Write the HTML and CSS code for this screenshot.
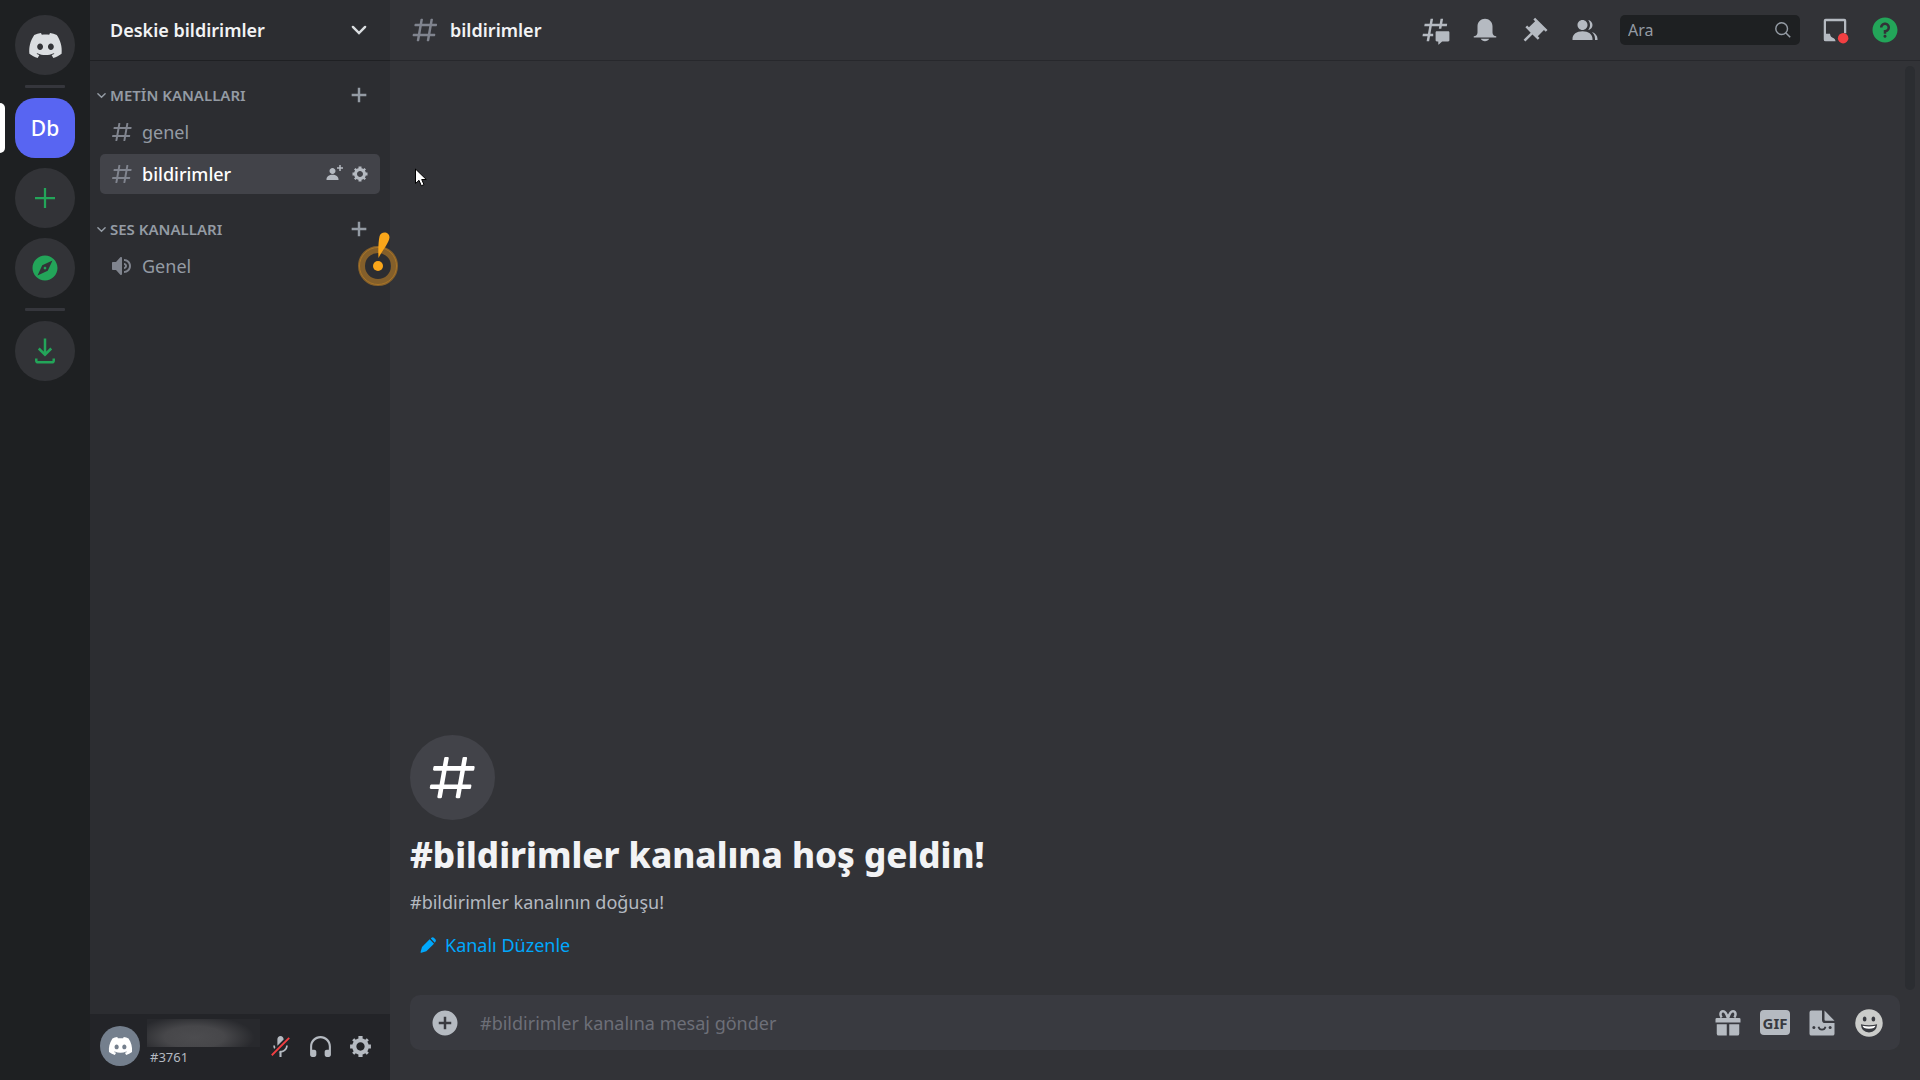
FILE: index.html
```html
<!DOCTYPE html>
<html lang="tr">

<head>
  <meta charset="UTF-8">
  <meta name="viewport" content="width=device-width, initial-scale=1.0">
  <title>#bildirimler | Deskie bildirimler</title>
  <link rel="stylesheet" href="styles.css">
</head>

<body>
  <!-- shared icons -->
  <svg class="sprite" aria-hidden="true">
    <symbol id="icon-hash" viewBox="0 0 24 24">
      <path d="M5.88657 21C5.57547 21 5.3399 20.7189 5.39427 20.4126L6.00001 17H2.59511C2.28449 17 2.04905 16.7198 2.10259 16.4138L2.27759 15.4138C2.31946 15.1746 2.52722 15 2.77011 15H6.35001L7.41001 9H4.00511C3.69449 9 3.45905 8.71977 3.51259 8.41381L3.68759 7.41381C3.72946 7.17456 3.93722 7 4.18011 7H7.76001L8.39677 3.41262C8.43914 3.17391 8.64664 3 8.88907 3H9.87344C10.1845 3 10.4201 3.28107 10.3657 3.58738L9.76001 7H15.76L16.3968 3.41262C16.4391 3.17391 16.6466 3 16.8891 3H17.8734C18.1845 3 18.4201 3.28107 18.3657 3.58738L17.76 7H21.1649C21.4755 7 21.711 7.28023 21.6574 7.58619L21.4824 8.58619C21.4406 8.82544 21.2328 9 20.9899 9H17.41L16.35 15H19.7549C20.0655 15 20.301 15.2802 20.2474 15.5862L20.0724 16.5862C20.0306 16.8254 19.8228 17 19.5799 17H16L15.3632 20.5874C15.3209 20.8261 15.1134 21 14.8709 21H13.8866C13.5755 21 13.3399 20.7189 13.3943 20.4126L14 17H8.00001L7.36325 20.5874C7.32088 20.8261 7.11337 21 6.87094 21H5.88657ZM9.41045 9L8.35045 15H14.3504L15.4104 9H9.41045Z"/>
    </symbol>
    <symbol id="icon-discord" viewBox="0 0 28 20">
      <path d="M23.0212 1.67671C21.3107 0.879656 19.5079 0.318797 17.6584 0C17.4062 0.461742 17.1749 0.934541 16.9708 1.4184C15.003 1.12145 12.9974 1.12145 11.0283 1.4184C10.819 0.934541 10.589 0.461744 10.3368 0.00546311C8.48074 0.324393 6.67795 0.885118 4.96746 1.68231C1.56727 6.77853 0.649666 11.7538 1.11108 16.652C3.10102 18.1418 5.3262 19.2743 7.69177 20C8.22338 19.2743 8.69519 18.4993 9.09812 17.691C8.32996 17.3997 7.58522 17.0424 6.87684 16.6135C7.06531 16.4762 7.24726 16.3387 7.42403 16.1847C11.5911 18.1749 16.408 18.1749 20.5763 16.1847C20.7531 16.3332 20.9351 16.4762 21.1171 16.6135C20.41 17.0369 19.6639 17.3997 18.897 17.691C19.3052 18.4993 19.7718 19.2689 20.3021 19.9945C22.6677 19.2689 24.8929 18.1364 26.8828 16.6466H26.8893C27.43 10.9731 25.9665 6.04728 23.0212 1.67671ZM9.68041 13.6383C8.39754 13.6383 7.34085 12.4453 7.34085 10.994C7.34085 9.54272 8.37155 8.34973 9.68041 8.34973C10.9893 8.34973 12.0395 9.54272 12.0187 10.994C12.0187 12.4453 10.9828 13.6383 9.68041 13.6383ZM18.3161 13.6383C17.0333 13.6383 15.9765 12.4453 15.9765 10.994C15.9765 9.54272 17.0124 8.34973 18.3161 8.34973C19.6184 8.34973 20.6751 9.54272 20.6543 10.994C20.6543 12.4453 19.6184 13.6383 18.3161 13.6383Z"/>
    </symbol>
    <symbol id="icon-gear" viewBox="0 0 24 24">
      <path fill-rule="evenodd" d="M19.738 10H22V14H19.739C19.498 14.931 19.1 15.798 18.565 16.564L20 18L18 20L16.565 18.564C15.797 19.099 14.932 19.498 14 19.738V22H10V19.738C9.069 19.498 8.203 19.099 7.436 18.564L6 20L4 18L5.436 16.564C4.901 15.799 4.502 14.932 4.262 14H2V10H4.262C4.502 9.068 4.9 8.202 5.436 7.436L4 6L6 4L7.436 5.436C8.202 4.9 9.068 4.502 10 4.262V2H14V4.261C14.932 4.502 15.797 4.9 16.565 5.435L18 3.999L20 5.999L18.564 7.436C19.099 8.202 19.498 9.069 19.738 10ZM12 16C14.2091 16 16 14.2091 16 12C16 9.79086 14.2091 8 12 8C9.79086 8 8 9.79086 8 12C8 14.2091 9.79086 16 12 16Z"/>
    </symbol>
    <symbol id="icon-plus" viewBox="0 0 18 18">
      <path d="M15 10H10V15H8V10H3V8H8V3H10V8H15V10Z"/>
    </symbol>
    <symbol id="icon-chevron" viewBox="0 0 18 18">
      <path d="M4 6.5L9 11.5L14 6.5" fill="none" stroke="currentColor" stroke-width="2" stroke-linecap="round"/>
    </symbol>
  </svg>

  <div class="app">
    <nav class="guilds" aria-label="Sunucular">
      <button class="guild home" aria-label="Direkt Mesajlar"><svg><use href="#icon-discord"/></svg></button>
      <div class="guild-separator"></div>
      <button class="guild selected">Db</button>
      <button class="guild green" aria-label="Sunucu Ekle">
        <svg viewBox="0 0 24 24"><path d="M20 11.1H12.9V4H11.1V11.1H4V12.9H11.1V20H12.9V12.9H20V11.1Z"/></svg>
      </button>
      <button class="guild green" aria-label="Keşfet">
        <svg viewBox="0 0 24 24"><path d="M12 10.9C11.39 10.9 10.9 11.39 10.9 12C10.9 12.61 11.39 13.1 12 13.1C12.61 13.1 13.1 12.61 13.1 12C13.1 11.39 12.61 10.9 12 10.9ZM12 2C6.48 2 2 6.48 2 12C2 17.52 6.48 22 12 22C17.52 22 22 17.52 22 12C22 6.48 17.52 2 12 2ZM14.19 14.19L6 18L9.81 9.81L18 6L14.19 14.19Z"/></svg>
      </button>
      <div class="guild-separator"></div>
      <button class="guild green" aria-label="Uygulamaları İndir">
        <svg viewBox="0 0 24 24"><path d="M12 2V15M7 10L12 15L17 10M5 18V19.500Q5 21 6.500 21H17.500Q19 21 19 19.500V18" fill="none" stroke="currentColor" stroke-width="2"/></svg>
      </button>
    </nav>

    <aside class="sidebar">
      <header class="sidebar-header">
        <h1>Deskie bildirimler</h1>
        <button class="icon-btn" aria-label="Sunucu menüsü"><svg class="icon-md"><use href="#icon-chevron"/></svg></button>
      </header>

      <div class="channels">
        <section class="category">
          <div class="category-header">
            <svg class="icon-xs"><use href="#icon-chevron"/></svg>
            <h2>METİN KANALLARI</h2>
            <button class="icon-btn" aria-label="Kanal Oluştur"><svg class="icon-md"><use href="#icon-plus"/></svg></button>
          </div>
          <div class="channel">
            <svg class="channel-icon"><use href="#icon-hash"/></svg>
            <a href="#genel">genel</a>
          </div>
          <div class="channel active">
            <svg class="channel-icon"><use href="#icon-hash"/></svg>
            <a href="#bildirimler">bildirimler</a>
            <button class="icon-btn" aria-label="Davet Oluştur">
              <svg class="icon-sm" viewBox="0 0 24 24"><path d="M21 3H24V5H21V8H19V5H16V3H19V0H21V3ZM10 12C12.205 12 14 10.205 14 8C14 5.795 12.205 4 10 4C7.795 4 6 5.795 6 8C6 10.205 7.795 12 10 12ZM10 13C5.289 13 2 15.467 2 19V20H18V19C18 15.467 14.711 13 10 13Z"/></svg>
            </button>
            <button class="icon-btn" aria-label="Kanalı Düzenle"><svg class="icon-sm"><use href="#icon-gear"/></svg></button>
          </div>
        </section>

        <section class="category">
          <div class="category-header">
            <svg class="icon-xs"><use href="#icon-chevron"/></svg>
            <h2>SES KANALLARI</h2>
            <button class="icon-btn" aria-label="Kanal Oluştur"><svg class="icon-md"><use href="#icon-plus"/></svg></button>
          </div>
          <div class="channel">
            <svg class="channel-icon" viewBox="0 0 24 24"><path d="M11.383 3.07904C11.009 2.92504 10.579 3.01004 10.293 3.29604L6 8.00204H3C2.45 8.00204 2 8.45304 2 9.00204V15.002C2 15.552 2.45 16.002 3 16.002H6L10.293 20.71C10.579 20.996 11.009 21.082 11.383 20.927C11.757 20.772 12 20.407 12 20.002V4.00204C12 3.59904 11.757 3.23204 11.383 3.07904ZM14 5.00195V7.00195C16.757 7.00195 19 9.24595 19 12.002C19 14.759 16.757 17.002 14 17.002V19.002C17.86 19.002 21 15.863 21 12.002C21 8.14295 17.86 5.00195 14 5.00195ZM14 9.00195C15.654 9.00195 17 10.349 17 12.002C17 13.657 15.654 15.002 14 15.002V13.002C14.551 13.002 15 12.553 15 12.002C15 11.451 14.551 11.002 14 11.002V9.00195Z"/></svg>
            <a href="#ses">Genel</a>
            <div class="hint">
              <svg viewBox="0 0 42 56">
                <circle cx="21" cy="35" r="16.500" fill="none" stroke="#845f2a" stroke-width="7"/>
                <circle cx="21" cy="35" r="18.500" fill="none" stroke="#a87427" stroke-width="1"/>
                <circle cx="21" cy="35" r="5" fill="#faa61a"/>
                <path d="M21.500 27C21 18 21.500 10 22.500 5.500C23.500 0 32.500 0 32.500 6.500C32 12 25 20 21.500 27Z" fill="#faa61a"/>
              </svg>
            </div>
          </div>
        </section>
      </div>

      <footer class="user-panel">
        <div class="avatar"><svg><use href="#icon-discord"/></svg></div>
        <div class="user-info">
          <div class="user-name"></div>
          <div class="user-tag">#3761</div>
        </div>
        <button class="panel-btn" aria-label="Sesi Aç">
          <svg viewBox="0 0 24 24"><path d="M6.7 11H5C5 12.19 5.34 13.3 5.9 14.28L7.13 13.05C6.86 12.43 6.7 11.74 6.7 11Z M9.01 11.085C9.015 11.1125 9.02 11.14 9.02 11.17L15 5.18V5C15 3.34 13.66 2 12 2C10.34 2 9 3.34 9 5V11C9 11.03 9.005 11.0575 9.01 11.085Z M11.7237 16.0927L10.9632 16.8531L10.2533 17.5688C10.4978 17.633 10.747 17.6839 11 17.72V22H13V17.72C16.28 17.23 19 14.41 19 11H17.3C17.3 14 14.76 16.1 12 16.1C11.9076 16.1 11.8155 16.0975 11.7237 16.0927Z"/><path d="M21 4.27L19.73 3L3 19.73L4.27 21L8.46 16.82L9.69 15.58L11.35 13.92L14.99 10.28L21 4.27Z" fill="#f23f42"/></svg>
        </button>
        <button class="panel-btn" aria-label="Sağırlaştır">
          <svg viewBox="0 0 24 24"><path d="M12 2.00305C6.486 2.00305 2 6.48805 2 12.0031V20.0031C2 21.1071 2.895 22.0031 4 22.0031H6C7.104 22.0031 8 21.1071 8 20.0031V17.0031C8 15.8991 7.104 15.0031 6 15.0031H4V12.0031C4 7.59105 7.589 4.00305 12 4.00305C16.411 4.00305 20 7.59105 20 12.0031V15.0031H18C16.896 15.0031 16 15.8991 16 17.0031V20.0031C16 21.1071 16.896 22.0031 18 22.0031H20C21.104 22.0031 22 21.1071 22 20.0031V12.0031C22 6.48805 17.514 2.00305 12 2.00305Z"/></svg>
        </button>
        <button class="panel-btn" aria-label="Kullanıcı Ayarları"><svg><use href="#icon-gear"/></svg></button>
      </footer>
    </aside>

    <main class="chat">
      <header class="chat-header">
        <svg class="icon-lg muted"><use href="#icon-hash"/></svg>
        <h2>bildirimler</h2>
        <div class="toolbar">
          <button class="icon-btn" aria-label="Alt Başlıklar">
            <svg class="icon-lg" viewBox="0 0 24 24"><path d="M5.43309 21C5.35842 21 5.30189 20.9325 5.31494 20.859L5.99991 17H2.14274C2.06819 17 2.01168 16.9327 2.02453 16.8593L2.33253 15.0993C2.34258 15.0419 2.39244 15 2.45074 15H6.34991L7.40991 9H3.55274C3.47819 9 3.42168 8.93274 3.43453 8.85931L3.74253 7.09931C3.75258 7.04189 3.80244 7 3.86074 7H7.75991L8.45234 3.09903C8.46251 3.04174 8.51231 3 8.57049 3H10.3267C10.4014 3 10.4579 3.06746 10.4449 3.14097L9.75991 7H15.7599L16.4523 3.09903C16.4625 3.04174 16.5123 3 16.5705 3H18.3267C18.4014 3 18.4579 3.06746 18.4449 3.14097L17.7599 7H21.6171C21.6916 7 21.7481 7.06725 21.7353 7.14069L21.4273 8.90069C21.4172 8.95811 21.3674 9 21.3091 9H17.4099L17.0495 11.04H15.05L15.4104 9H9.41035L8.35035 15H10.5599V17H7.99991L7.30749 20.901C7.29732 20.9583 7.24752 21 7.18934 21H5.43309Z"/><path d="M13.4399 12.96C12.9097 12.96 12.4799 13.3898 12.4799 13.92V20.2213C12.4799 20.7515 12.9097 21.1813 13.4399 21.1813H14.3999C14.5325 21.1813 14.6399 21.2887 14.6399 21.4213V23.4597C14.6399 23.6677 14.8865 23.7773 15.0408 23.6378L17.4858 21.4289C17.6622 21.2695 17.8916 21.1813 18.1294 21.1813H22.5599C23.0901 21.1813 23.5199 20.7515 23.5199 20.2213V13.92C23.5199 13.3898 23.0901 12.96 22.5599 12.96H13.4399Z"/></svg>
          </button>
          <button class="icon-btn" aria-label="Bildirim Ayarları">
            <svg class="icon-lg" viewBox="0 0 24 24"><path d="M18 9V14C18 15.657 19.344 17 21 17V18H3V17C4.656 17 6 15.657 6 14V9C6 5.686 8.686 3 12 3C15.314 3 18 5.686 18 9ZM11.9999 21C10.5239 21 9.24793 20.19 8.55493 19H15.4449C14.7519 20.19 13.4759 21 11.9999 21Z"/></svg>
          </button>
          <button class="icon-btn" aria-label="Sabitlenmiş Mesajlar">
            <svg class="icon-lg" viewBox="0 0 24 24"><path d="M22 12L12.101 2.10101L10.686 3.51401L12.101 4.92901L7.15096 9.87801V9.88001L5.73596 8.46501L4.32196 9.88001L8.56496 14.122L2.90796 19.778L4.32196 21.192L9.97896 15.536L14.222 19.778L15.636 18.364L14.222 16.95L19.171 12H19.172L20.586 13.414L22 12Z"/></svg>
          </button>
          <button class="icon-btn" aria-label="Üye Listesi">
            <svg class="icon-lg" viewBox="0 0 24 24"><path d="M14 8.00598C14 10.211 12.206 12.006 10 12.006C7.795 12.006 6 10.211 6 8.00598C6 5.80098 7.794 4.00598 10 4.00598C12.206 4.00598 14 5.80098 14 8.00598ZM2 19.006C2 15.473 5.29 13.006 10 13.006C14.711 13.006 18 15.473 18 19.006V20.006H2V19.006Z"/><path d="M20.0001 20.006H22.0001V19.006C22.0001 16.4433 20.2697 14.4415 17.5213 13.5352C19.0621 14.9127 20.0001 16.8059 20.0001 19.006V20.006Z"/><path d="M14.8834 11.9077C16.6657 11.5044 18.0001 9.9077 18.0001 8.00598C18.0001 5.96916 16.4693 4.28218 14.4971 4.0367C15.4322 5.09511 16.0001 6.48524 16.0001 8.00598C16.0001 9.44888 15.4889 10.7742 14.6378 11.8102C14.7203 11.8418 14.8022 11.8743 14.8834 11.9077Z"/></svg>
          </button>
          <div class="search">
            <input type="text" placeholder="Ara" aria-label="Ara">
            <svg class="icon-sm" viewBox="0 0 20 20"><circle cx="8.500" cy="8.500" r="6.500" fill="none" stroke="currentColor" stroke-width="1.600"/><path d="M13 13L18 18" stroke="currentColor" stroke-width="1.800"/></svg>
          </div>
          <button class="icon-btn" aria-label="Gelen Kutusu">
            <svg class="icon-lg" viewBox="0 0 24 24"><path fill-rule="evenodd" d="M4.500 3H19.500Q21 3 21 4.500V14.500H19.200V5H4.800V15H8Q8.300 18 11 18.500Q12 19 12.500 21H4.500Q3 21 3 19.500V4.500Q3 3 4.500 3Z"/><circle cx="18.500" cy="18.500" r="4.200" fill="#f23f42"/></svg>
          </button>
          <button class="icon-btn help" aria-label="Yardım">
            <svg class="icon-lg" viewBox="0 0 24 24"><path d="M12 2C6.486 2 2 6.487 2 12C2 17.515 6.486 22 12 22C17.514 22 22 17.515 22 12C22 6.487 17.514 2 12 2ZM12 18.25C11.31 18.25 10.75 17.691 10.75 17C10.75 16.31 11.31 15.75 12 15.75C12.69 15.75 13.25 16.31 13.25 17C13.25 17.691 12.69 18.25 12 18.25ZM13 13.875V15H11V12H12C13.104 12 14 11.103 14 10C14 8.896 13.104 8 12 8C10.896 8 10 8.896 10 10H8C8 7.795 9.795 6 12 6C14.205 6 16 7.795 16 10C16 11.861 14.723 13.429 13 13.875Z"/></svg>
          </button>
        </div>
      </header>

      <div class="messages">
        <div class="welcome">
          <div class="welcome-icon"><svg><use href="#icon-hash"/></svg></div>
          <h3>#bildirimler kanalına hoş geldin!</h3>
          <p>#bildirimler kanalının doğuşu!</p>
          <button class="edit-btn">
            <svg viewBox="0 0 24 24"><path d="M21 10L9.500 21.500L2 23.500Q0.500 24 1 22L3 15L14.500 3.500ZM16.200 2.200L17.200 1.200Q19 -0.200 20.800 1.200L23 3.500Q24.500 5.200 23.200 7L22.200 8.500Z"/></svg>
            Kanalı Düzenle
          </button>
        </div>
        <div class="scrollbar"></div>
      </div>

      <form class="composer">
        <button type="button" class="icon-btn" aria-label="Dosya yükle">
          <svg class="icon-lg" viewBox="0 0 24 24"><path d="M12 2C6.477 2 2 6.477 2 12C2 17.523 6.477 22 12 22C17.523 22 22 17.523 22 12C22 6.477 17.523 2 12 2ZM17 13H13V17H11V13H7V11H11V7H13V11H17V13Z"/></svg>
        </button>
        <input type="text" placeholder="#bildirimler kanalına mesaj gönder" aria-label="Mesaj">
        <div class="composer-tools">
          <button type="button" class="icon-btn" aria-label="Hediye">
            <svg class="icon-lg" viewBox="0 0 24 24"><path d="M3 8H21Q22 8 22 9V11.500H2V9Q2 8 3 8ZM3 13H11V22H4.500Q3 22 3 20.500ZM13 13H21V20.500Q21 22 19.500 22H13Z"/><path d="M12 8.500C11 4.500 9.500 2.500 8 2.500C5.500 2.500 5.500 6 7 7.500M12 8.500C13 4.500 14.500 2.500 16 2.500C18.500 2.500 18.500 6 17 7.500" fill="none" stroke="currentColor" stroke-width="2"/></svg>
          </button>
          <button type="button" class="gif-btn">GIF</button>
          <button type="button" class="icon-btn" aria-label="Çıkartma">
            <svg class="icon-lg" viewBox="0 0 24 24"><path d="M4 2H12V9.500Q12 12 14.500 12H22V20.500Q22 22 20.500 22H3.500Q2 22 2 20.500V3.500Q2 2 3.500 2ZM14 2L22 10.200H15Q14 10.200 14 9.200Z"/><path d="M9.200 15Q9.800 17.300 12 17.300Q14.200 17.300 14.800 15" fill="none" stroke="#383a40" stroke-width="1.400"/><circle cx="5.500" cy="15.500" r="1.200" fill="#383a40"/><circle cx="18.500" cy="15.500" r="1.200" fill="#383a40"/></svg>
          </button>
          <button type="button" class="icon-btn emoji" aria-label="Emoji">
            <svg class="icon-lg" viewBox="0 0 24 24"><circle cx="12" cy="12" r="11"/><ellipse cx="8.500" cy="8.800" rx="1.500" ry="2" fill="#383a40"/><ellipse cx="15.500" cy="8.800" rx="1.500" ry="2" fill="#383a40"/><path d="M5.500 13Q12 14.500 18.500 13Q18 19.500 12 19.500Q6 19.500 5.500 13Z" fill="#383a40"/><path d="M6.800 14.200Q12 15.500 17.200 14.200Q16.800 16.500 12 16.500Q7.200 16.500 6.800 14.200Z" fill="#fff"/></svg>
          </button>
        </div>
      </form>
    </main>
  </div>

  <svg class="cursor" viewBox="0 0 12 19" aria-hidden="true"><path d="M0.500 1V15.500L4 12.300L6.300 17.800L9 16.600L6.700 11.500H11.300Z" fill="#fff" stroke="#000" stroke-width="1"/></svg>
</body>

</html>
```
FILE: styles.css
```css
* {
  margin: 0;
  padding: 0;
  box-sizing: border-box;
}

body {
  font-family: "Noto Sans", "Open Sans", sans-serif;
  font-size: 18px;
  line-height: 24px;
  color: #dbdee1;
  background-color: #323337;
}

button,
input {
  font: inherit;
  color: inherit;
  background: none;
  border: none;
  outline: none;
}

button {
  cursor: pointer;
}

svg {
  display: block;
  flex-shrink: 0;
  fill: currentColor;
}

a {
  color: inherit;
  text-decoration: none;
}

.sprite {
  display: none;
}

.app {
  display: flex;
  height: 100vh;
}

.icon-btn {
  display: flex;
  align-items: center;
  justify-content: center;
}

.icon-xs {
  width: 13px;
  height: 13px;
}

.icon-sm {
  width: 18px;
  height: 18px;
}

.icon-md {
  width: 22px;
  height: 22px;
}

.icon-lg {
  width: 30px;
  height: 30px;
}

.muted {
  color: #80848e;
}

/* server list */
.guilds {
  display: flex;
  flex-direction: column;
  align-items: center;
  gap: 10px;
  width: 90px;
  padding-top: 15px;
  background-color: #1e2022;
}

.guild {
  display: flex;
  align-items: center;
  justify-content: center;
  position: relative;
  width: 60px;
  height: 60px;
  border-radius: 50%;
  background-color: #323337;
  font-size: 21px;
  font-weight: 500;
}

.guild svg {
  width: 30px;
  height: 30px;
}

.guild.home svg {
  width: 35px;
  height: 25px;
}

.guild.green {
  color: #23a559;
}

.guild.selected {
  border-radius: 20px;
  background-color: #5865f2;
  color: #fff;
}

.guild.selected::before {
  content: "";
  position: absolute;
  left: -15px;
  top: 5px;
  width: 5px;
  height: 50px;
  border-radius: 0 5px 5px 0;
  background-color: #fff;
}

.guild-separator {
  width: 40px;
  height: 3px;
  border-radius: 1px;
  background-color: #35363c;
}

/* channel list */
.sidebar {
  display: flex;
  flex-direction: column;
  width: 300px;
  background-color: #2c2d31;
}

.sidebar-header {
  display: flex;
  align-items: center;
  justify-content: space-between;
  height: 61px;
  padding: 0 20px;
  border-bottom: 1px solid #1f2023;
}

.sidebar-header h1 {
  font-size: 18px;
  font-weight: 600;
  color: #f2f3f5;
}

.channels {
  flex: 1;
  padding: 19px 10px 0 5px;
}

.category {
  margin-bottom: 20px;
}

.category-header {
  display: flex;
  align-items: center;
  gap: 2px;
  height: 30px;
  margin-bottom: 2px;
  padding-right: 10px;
  color: #949ba4;
}

.category-header h2 {
  flex: 1;
  font-size: 15px;
  font-weight: 600;
}

.channel {
  display: flex;
  align-items: center;
  gap: 8px;
  position: relative;
  height: 40px;
  margin: 0 0 2px 5px;
  padding: 0 11px 0 10px;
  border-radius: 5px;
  color: #949ba4;
}

.channel a {
  flex: 1;
}

.channel-icon {
  width: 24px;
  height: 24px;
  color: #80848e;
}

.channel.active {
  background-color: #424349;
}

.channel.active a {
  font-weight: 500;
  color: #fff;
}

.channel .icon-btn {
  color: #b5bac1;
}

.hint {
  position: absolute;
  right: -19px;
  bottom: -1px;
  width: 42px;
  z-index: 1;
}

.user-panel {
  display: flex;
  align-items: center;
  height: 66px;
  padding: 0 10px 2px;
  background-color: #232428;
}

.avatar {
  display: flex;
  align-items: center;
  justify-content: center;
  width: 40px;
  height: 40px;
  border-radius: 50%;
  background-color: #747f8d;
  color: #fff;
}

.avatar svg {
  width: 25px;
  height: 18px;
}

.user-info {
  flex: 1;
  padding: 0 0 6px 7px;
}

/* hidden name */
.user-name {
  height: 28px;
  background: radial-gradient(ellipse 60px 22px at 42% 65%, #4c4c4f, #47474a 50%, #28292d);
}

.user-tag {
  padding-left: 3px;
  font-size: 13px;
  line-height: 20px;
  color: #b5bac1;
}

.panel-btn {
  display: flex;
  align-items: center;
  justify-content: center;
  width: 40px;
  height: 40px;
  color: #b5bac1;
}

.panel-btn svg {
  width: 25px;
  height: 25px;
}

/* chat */
.chat {
  display: flex;
  flex: 1;
  flex-direction: column;
  min-width: 0;
}

.chat-header {
  display: flex;
  align-items: center;
  gap: 10px;
  height: 61px;
  padding: 0 20px;
  border-bottom: 1px solid #27282c;
}

.chat-header h2 {
  flex: 1;
  font-size: 18px;
  font-weight: 600;
  color: #f2f3f5;
}

.toolbar {
  display: flex;
  align-items: center;
  gap: 20px;
  color: #b5bac1;
}

.toolbar .help {
  color: #23a559;
}

.search {
  display: flex;
  align-items: center;
  width: 180px;
  height: 30px;
  padding: 0 8px;
  border-radius: 5px;
  background-color: #1e2022;
  color: #949ba4;
}

.search input {
  flex: 1;
  min-width: 0;
  font-size: 16px;
}

.search input::placeholder {
  color: #949ba4;
  opacity: 1;
}

.messages {
  display: flex;
  flex: 1;
  align-items: flex-end;
  justify-content: space-between;
  padding: 5px 5px 5px 20px;
}

.welcome {
  padding-bottom: 25px;
}

.welcome-icon {
  display: flex;
  align-items: center;
  justify-content: center;
  width: 85px;
  height: 85px;
  border-radius: 50%;
  background-color: #424349;
  color: #fff;
}

.welcome-icon svg {
  width: 55px;
  height: 55px;
}

.welcome h3 {
  margin: 10px 0;
  font-size: 35px;
  font-weight: 800;
  line-height: 50px;
  color: #f2f3f5;
}

.welcome p {
  color: #b5bac1;
}

.edit-btn {
  display: flex;
  align-items: center;
  gap: 9px;
  height: 40px;
  margin-top: 11px;
  padding: 0 10px;
  color: #00a8fc;
}

.edit-btn svg {
  width: 16px;
  height: 16px;
}

.scrollbar {
  align-self: stretch;
  width: 10px;
  border-radius: 5px;
  background-color: #2b2d31;
}

.composer {
  display: flex;
  align-items: center;
  gap: 20px;
  height: 55px;
  margin: 0 20px 30px;
  padding: 0 16px 0 20px;
  border-radius: 10px;
  background-color: #393a40;
  color: #b5bac1;
}

.composer input {
  flex: 1;
  min-width: 0;
}

.composer input::placeholder {
  color: #6d6f78;
  opacity: 1;
}

.composer-tools {
  display: flex;
  align-items: center;
  gap: 17px;
}

.gif-btn {
  width: 30px;
  height: 25px;
  border-radius: 4px;
  background-color: #b5bac1;
  font-size: 15px;
  font-weight: 700;
  color: #383a40;
}

.composer-tools .emoji {
  color: #cbccca;
}

/* mouse pointer above everything */
.cursor {
  position: absolute;
  left: 415px;
  top: 168px;
  width: 12px;
  height: 19px;
}
```
